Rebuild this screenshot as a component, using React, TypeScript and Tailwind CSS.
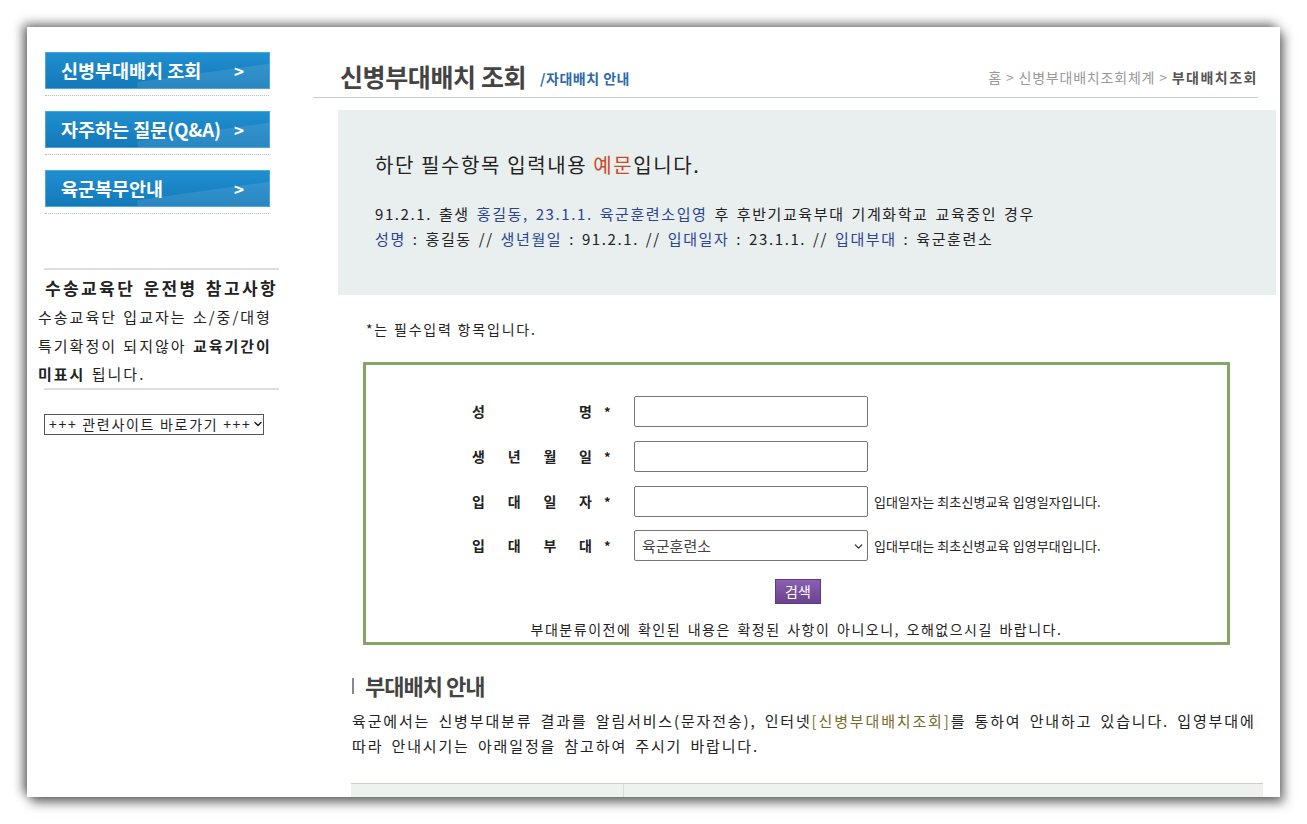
import { ChevronDown } from 'lucide-react';

// ── Data ──────────────────────────────────────────────────────────────────

const MENU = ['신병부대배치 조회', '자주하는 질문(Q&A)', '육군복무안내'];

const FIELDS: { label: string[]; note?: string; select?: boolean }[] = [
  { label: ['성', '명'] },
  { label: ['생', '년', '월', '일'] },
  { label: ['입', '대', '일', '자'], note: '입대일자는 최초신병교육 입영일자입니다.' },
  { label: ['입', '대', '부', '대'], note: '입대부대는 최초신병교육 입영부대입니다.', select: true },
];

const KR = "font-['Noto_Sans_CJK_KR','Noto_Sans',sans-serif]";

// ── Sidebar ───────────────────────────────────────────────────────────────

function Sidebar() {
  return (
    <aside className="w-[286px] shrink-0 pt-[25px]">
      {MENU.map((item, i) => (
        <div key={item} className={`pl-[18px] ${i === 0 ? '' : 'mt-[15px]'}`}>
          <div className="relative flex h-[37px] w-[225px] items-center justify-between overflow-hidden border border-[#4aa6dc] bg-gradient-to-b from-[#1f8fd0] to-[#1479b9] pl-[15px] pr-[25px] text-[18.5px] font-bold text-white">
            <span className="relative z-10">{item}</span>
            <span className="relative z-10 text-[17px]">&gt;</span>
            <div className="absolute -right-[30px] top-[18px] h-[40px] w-[160px] -rotate-[8deg] bg-white/10" />
          </div>
          <div className="mt-[6px] w-[224px] border-t border-dotted border-[#bbb]" />
        </div>
      ))}

      <div className="ml-[17px] mt-[54px] w-[235px] border-t-2 border-[#ddd]" />
      <div className="ml-[18px] mt-[6px] whitespace-nowrap text-[17px] font-bold leading-[24px] tracking-[2.4px] [word-spacing:2px] text-[#222]">
        수송교육단 운전병 참고사항
      </div>
      <p className="ml-[11px] mt-[3px] whitespace-nowrap text-[15px] leading-[28.5px] tracking-[2px] [word-spacing:1px] text-[#222]">
        수송교육단 입교자는 소/중/대형
        <br />
        특기확정이 되지않아 <b>교육기간이</b>
        <br />
        <b>미표시</b> 됩니다.
      </p>
      <div className="ml-[17px] mt-[-1px] w-[235px] border-t-2 border-[#ddd]" />

      <div className="ml-[17px] mt-[24px] flex h-[21px] w-[220px] items-center justify-between border border-[#555] bg-white pl-[4px] pr-[1px] text-[14px] tracking-[1.7px] text-[#222]">
        <span className="whitespace-nowrap">+++ 관련사이트 바로가기 +++</span>
        <ChevronDown size={12} strokeWidth={3} className="shrink-0" />
      </div>
    </aside>
  );
}

// ── Form ──────────────────────────────────────────────────────────────────

function Form() {
  return (
    <div className="ml-[50px] mt-[22px] h-[283px] w-[867px] border-[3px] border-[#85a566] pt-[31px]">
      {FIELDS.map((f, i) => (
        <div key={i} className={`flex items-center ${i === 0 ? '' : i === 3 ? 'mt-[13px]' : 'mt-[14px]'}`}>
          <div className="ml-[106px] flex w-[120px] items-center justify-between text-[14px] font-bold text-[#222]">
            {f.label.map((c, j) => (
              <span key={j}>{c}</span>
            ))}
          </div>
          <span className="ml-[12px] w-[30px] text-[13px] font-bold text-[#222]">*</span>
          {f.select ? (
            <div className="flex h-[31px] w-[234px] items-center justify-between rounded-[2px] border border-[#767676] bg-white pl-[7px] pr-[2px] pt-[2px] text-[15px] text-[#444]">
              <span>육군훈련소</span>
              <ChevronDown size={13} strokeWidth={2.5} className="text-[#333]" />
            </div>
          ) : (
            <div className="h-[31px] w-[234px] rounded-[2px] border border-[#767676] bg-white" />
          )}
          {f.note && (
            <span className="ml-[6px] whitespace-nowrap text-[13px] tracking-[0.1px] text-[#222]">{f.note}</span>
          )}
        </div>
      ))}

      <div className="mt-[18px] flex justify-center pl-[3px]">
        <div className="flex h-[25px] w-[46px] items-center justify-center border border-[#5e3a7d] bg-gradient-to-b from-[#8a5fb0] to-[#6a4390] text-[14px] text-white">
          검색
        </div>
      </div>
      <p className="mt-[15px] text-center text-[14px] tracking-[1.5px] [word-spacing:2px] text-[#222]">
        부대분류이전에 확인된 내용은 확정된 사항이 아니오니, 오해없으시길 바랍니다.
      </p>
    </div>
  );
}

// ── Main ──────────────────────────────────────────────────────────────────

function Main() {
  return (
    <main className="flex-1">
      {/* Title bar */}
      <div className="mr-[22px] flex h-[71px] items-end justify-between border-b border-[#ccc] pb-[4px] pl-[27px]">
        <div className="flex items-end">
          <h1 className="text-[25px] font-bold leading-[34px] tracking-[-0.4px] text-[#444]">신병부대배치 조회</h1>
          <span className="mb-[4px] ml-[14px] text-[14px] font-bold tracking-[0.5px] text-[#2f6aa6]">/자대배치 안내</span>
        </div>
        <div className="mb-[5px] whitespace-nowrap text-[14px] tracking-[0.8px] text-[#999]">
          홈 &gt; 신병부대배치조회체계 &gt; <b className="tracking-[1.5px] text-[#555]">부대배치조회</b>
        </div>
      </div>

      {/* Example box */}
      <div className="ml-[25px] mr-[4px] mt-[12px] h-[185px] bg-[#e9eeee] pl-[37px] pt-[41px]">
        <p className="text-[20px] leading-[28px] tracking-[1.6px] text-[#222]">
          하단 필수항목 입력내용 <span className="text-[#c74a2c]">예문</span>입니다.
        </p>
        <p className="mt-[22px] whitespace-nowrap text-[15px] leading-[25px] tracking-[1.6px] [word-spacing:2px] text-[#222]">
          91.2.1. 출생 <span className="text-[#2b4590]">홍길동, 23.1.1. 육군훈련소입영</span> 후 후반기교육부대 기계화학교 교육중인 경우
          <br />
          <span className="text-[#2b4590]">성명</span> : 홍길동 // <span className="text-[#2b4590]">생년월일</span> : 91.2.1. //{' '}
          <span className="text-[#2b4590]">입대일자</span> : 23.1.1. // <span className="text-[#2b4590]">입대부대</span> : 육군훈련소
        </p>
      </div>

      <p className="ml-[53px] mt-[24px] text-[14px] tracking-[1.8px] text-[#222]">*는 필수입력 항목입니다.</p>

      <Form />

      {/* 부대배치 안내 */}
      <div className="ml-[39px] mt-[24px] flex items-center">
        <div className="h-[16px] w-[2px] bg-[#888]" />
        <h2 className="ml-[11px] text-[22px] font-bold tracking-[-1px] text-[#444]">부대배치 안내</h2>
      </div>
      <p className="ml-[39px] mt-[6px] whitespace-nowrap text-[15px] leading-[25px] tracking-[1.85px] [word-spacing:3px] text-[#222]">
        육군에서는 신병부대분류 결과를 알림서비스(문자전송), 인터넷<span className="text-[#7b6a2a]">[신병부대배치조회]</span>를 통하여 안내하고 있습니다. 입영부대에
        <br />
        따라 안내시기는 아래일정을 참고하여 주시기 바랍니다.
      </p>
      <div className="ml-[38px] mr-[17px] mt-[25px] flex h-[20px] border-t border-[#ccd2c6] bg-[#eef2ee]">
        <div className="w-[273px] border-r border-[#d8ddd4]" />
      </div>
    </main>
  );
}

export default function App() {
  return (
    <div className={`h-[824px] w-[1307px] overflow-hidden bg-white pl-[27px] pt-[27px] ${KR}`}>
      <div className="flex h-[770px] w-[1253px] overflow-hidden bg-white shadow-[-4px_-3px_10px_rgba(0,0,0,0.55),4px_6px_10px_rgba(0,0,0,0.5)]">
        <Sidebar />
        <Main />
      </div>
    </div>
  );
}
